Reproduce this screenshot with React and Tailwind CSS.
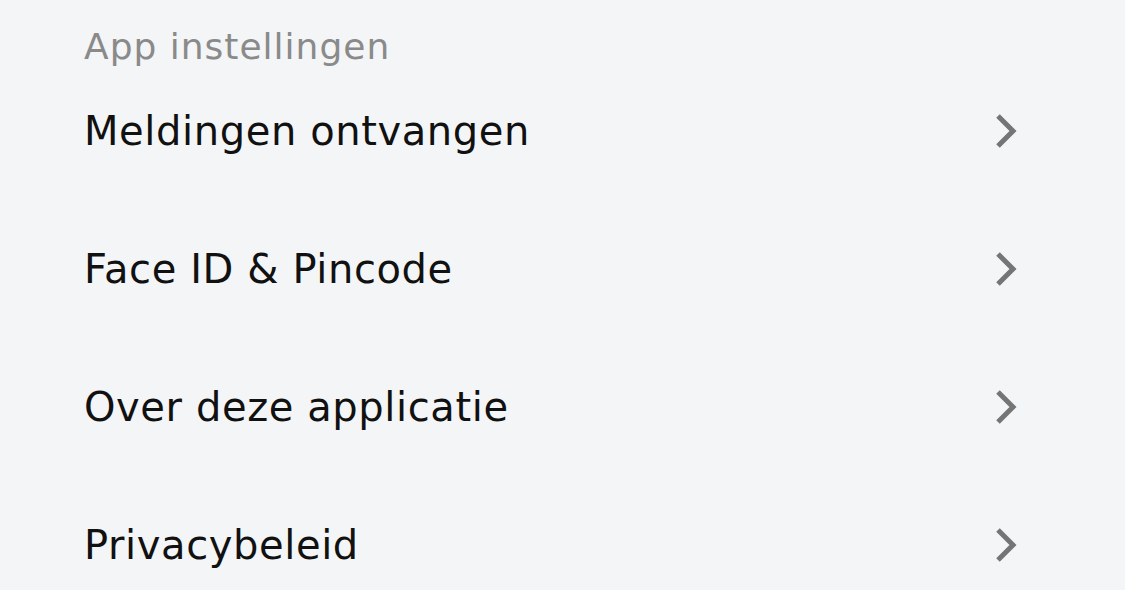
const items = ['Meldingen ontvangen', 'Face ID & Pincode', 'Over deze applicatie', 'Privacybeleid']

function Chevron() {
  return (
    <svg width="24" height="36" viewBox="0 0 24 36" fill="none" className="shrink-0">
      <path d="M4 3 L19 18 L4 33" stroke="#757575" strokeWidth="5" />
    </svg>
  )
}

export default function App() {
  return (
    <div
      className="w-[1125px] h-[590px] overflow-hidden bg-[#f4f5f7] pl-[84px] pr-[107px]"
      style={{ fontFamily: '"DejaVu Sans", sans-serif' }}
    >
      <div className="h-[62px] flex items-center pt-[32px]">
        <span className="text-[#8a8a8a] text-[36px] leading-none tracking-[1px]">App instellingen</span>
      </div>
      {items.map((label) => (
        <div key={label} className="h-[138px] flex items-center justify-between">
          <span className="text-[#111111] text-[40px] leading-none tracking-[0.6px]">{label}</span>
          <Chevron />
        </div>
      ))}
    </div>
  )
}
